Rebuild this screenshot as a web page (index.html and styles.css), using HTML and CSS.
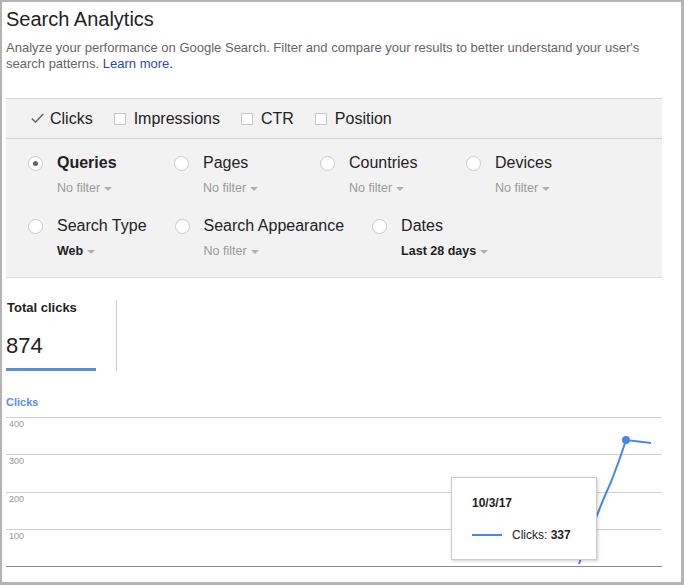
FILE: index.html
```html
<!DOCTYPE html>
<html>
<head>
<meta charset="utf-8">
<link rel="stylesheet" href="styles.css">
</head>
<body>
<div class="frame">
  <h1 class="title">Search Analytics</h1>
  <p class="desc">Analyze your performance on Google Search. Filter and compare your results to better understand your user's search patterns. <a class="link" href="#">Learn more.</a></p>

  <div class="panel">
    <div class="metrics-row">
      <span class="chk"><svg class="tick" width="13" height="11" viewBox="0 0 13 11"><polyline points="0.8,5.5 4.5,9.2 12.2,1" fill="none" stroke="#666" stroke-width="1.6"/></svg>Clicks</span>
      <span class="chk"><span class="box"></span>Impressions</span>
      <span class="chk"><span class="box"></span>CTR</span>
      <span class="chk"><span class="box"></span>Position</span>
    </div>
    <div class="groups">
      <div class="grp"><span class="radio on"></span><div class="grp-text"><div class="lbl bold">Queries</div><div class="sub">No filter<i class="caret"></i></div></div></div>
      <div class="grp"><span class="radio"></span><div class="grp-text"><div class="lbl">Pages</div><div class="sub">No filter<i class="caret"></i></div></div></div>
      <div class="grp"><span class="radio"></span><div class="grp-text"><div class="lbl">Countries</div><div class="sub">No filter<i class="caret"></i></div></div></div>
      <div class="grp"><span class="radio"></span><div class="grp-text"><div class="lbl">Devices</div><div class="sub">No filter<i class="caret"></i></div></div></div>
      <div class="grp"><span class="radio"></span><div class="grp-text"><div class="lbl">Search Type</div><div class="sub val">Web<i class="caret"></i></div></div></div>
      <div class="grp"><span class="radio"></span><div class="grp-text"><div class="lbl">Search Appearance</div><div class="sub">No filter<i class="caret"></i></div></div></div>
      <div class="grp"><span class="radio"></span><div class="grp-text"><div class="lbl">Dates</div><div class="sub val">Last 28 days<i class="caret"></i></div></div></div>
    </div>
  </div>

  <div class="totals">
    <div class="metric">
      <div class="metric-name">Total clicks</div>
      <div class="metric-value">874</div>
      <div class="metric-bar"></div>
    </div>
    <div class="vdiv"></div>
  </div>

  <div class="chart-label">Clicks</div>
  <div class="chart">
    <svg class="chart-svg" width="656" height="170" viewBox="0 0 656 170">
      <line x1="0" y1="7.5" x2="656" y2="7.5" stroke="#cfcfcf" stroke-width="1"/>
      <line x1="0" y1="44.5" x2="656" y2="44.5" stroke="#cfcfcf" stroke-width="1"/>
      <line x1="0" y1="82.5" x2="656" y2="82.5" stroke="#cfcfcf" stroke-width="1"/>
      <line x1="0" y1="119.5" x2="656" y2="119.5" stroke="#cfcfcf" stroke-width="1"/>
      <line x1="0" y1="156.5" x2="656" y2="156.5" stroke="#888" stroke-width="1"/>
      <text class="axis" x="3" y="17">400</text>
      <text class="axis" x="3" y="54">300</text>
      <text class="axis" x="3" y="92">200</text>
      <text class="axis" x="3" y="129">100</text>
      <path d="M573 154 Q592 100 605 72 Q613 52 620 30 L645 33" fill="none" stroke="#4a86e8" stroke-width="2"/>
      <circle cx="620" cy="30" r="4" fill="#4a86e8"/>
    </svg>
    <div class="tip">
      <div class="tip-date">10/3/17</div>
      <div class="tip-row"><span class="tip-line"></span><span>Clicks: <b>337</b></span></div>
    </div>
  </div>
</div>
</body>
</html>
```

FILE: styles.css
```css
* { box-sizing: border-box; }
html, body { margin: 0; padding: 0; background: #fff; }
body { font-family: "Liberation Sans", Arial, sans-serif; color: #222; }

.frame {
  width: 684px;
  height: 585px;
  border-style: solid;
  border-color: #b4b4b4;
  border-width: 2px 3px 3px 2px;
  padding: 5px 19px 0 4px;
  overflow: hidden;
}

.title {
  margin: 0;
  font-size: 20px;
  font-weight: normal;
  line-height: 24px;
  color: #222;
}

.desc {
  margin: 9px 0 0;
  font-size: 13px;
  line-height: 16px;
  color: #666;
}
.link { color: #2a4bb0; text-decoration: none; }

.panel {
  margin-top: 26px;
  background: #f2f2f2;
  border-top: 1px solid #d4d4d4;
  border-bottom: 1px solid #dedede;
}

.metrics-row {
  height: 40px;
  border-bottom: 1px solid #d4d4d4;
  display: flex;
  align-items: center;
  padding-left: 25px;
  gap: 21px;
  font-size: 16px;
  color: #222;
}
.chk { display: flex; align-items: center; }
.tick { margin-right: 6px; }
.box {
  width: 12px;
  height: 12px;
  background: #fff;
  border: 1px solid #c8c8c8;
  margin-right: 8px;
}

.groups {
  display: flex;
  flex-wrap: wrap;
  row-gap: 20px;
  padding: 14px 0 18px 22px;
}
.grp {
  display: flex;
  align-items: flex-start;
  min-width: 146px;
  padding-right: 28px;
}
.radio {
  width: 15px;
  height: 15px;
  margin-top: 3px;
  margin-right: 14px;
  border-radius: 50%;
  background: #fff;
  border: 1px solid #cacaca;
  display: flex;
  align-items: center;
  justify-content: center;
  flex: none;
}
.radio.on::after {
  content: "";
  width: 5px;
  height: 5px;
  border-radius: 50%;
  background: #666;
}
.lbl { font-size: 16px; line-height: 20px; color: #222; white-space: nowrap; }
.lbl.bold { font-weight: bold; }
.sub {
  margin-top: 7px;
  font-size: 12.5px;
  line-height: 16px;
  color: #999;
  display: flex;
  align-items: center;
  white-space: nowrap;
}
.sub.val { color: #222; font-weight: bold; }
.caret {
  display: inline-block;
  width: 0;
  height: 0;
  margin-left: 4px;
  margin-top: 1px;
  border-left: 4px solid transparent;
  border-right: 4px solid transparent;
  border-top: 4px solid #b0b0b0;
}

.totals {
  display: flex;
  margin-top: 22px;
  margin-left: 2px;
}
.metric { width: 90px; margin-left: -2px; padding-left: 1px; }
.metric-name { font-size: 13px; line-height: 16px; font-weight: bold; color: #222; }
.metric-value { margin-top: 17px; font-size: 22px; line-height: 26px; color: #222; margin-left: -1px; }
.metric-bar { margin-top: 9px; height: 3px; background: #5b8ed8; margin-left: -1px; }
.vdiv { width: 1px; height: 71px; background: #d0d0d0; margin-left: 20px; }

.chart-label {
  margin-top: 24px;
  font-size: 11px;
  line-height: 14px;
  font-weight: bold;
  color: #5b8ee6;
}

.chart {
  position: relative;
  margin-top: 1px;
  width: 656px;
  height: 170px;
}
.chart-svg { display: block; }
.axis { font-family: "Liberation Sans", Arial, sans-serif; font-size: 9px; fill: #999; }

.tip {
  position: absolute;
  left: 445px;
  top: 67px;
  width: 146px;
  height: 83px;
  background: #fff;
  border: 1px solid #cccccc;
  box-shadow: 1px 1px 3px rgba(0,0,0,0.2);
  padding: 17px 0 0 20px;
  font-size: 12px;
  color: #222;
}
.tip-date { font-weight: bold; line-height: 16px; }
.tip-row { display: flex; align-items: center; margin-top: 16px; line-height: 16px; }
.tip-line { width: 30px; height: 2px; background: #4a86e8; margin-right: 10px; }
```
